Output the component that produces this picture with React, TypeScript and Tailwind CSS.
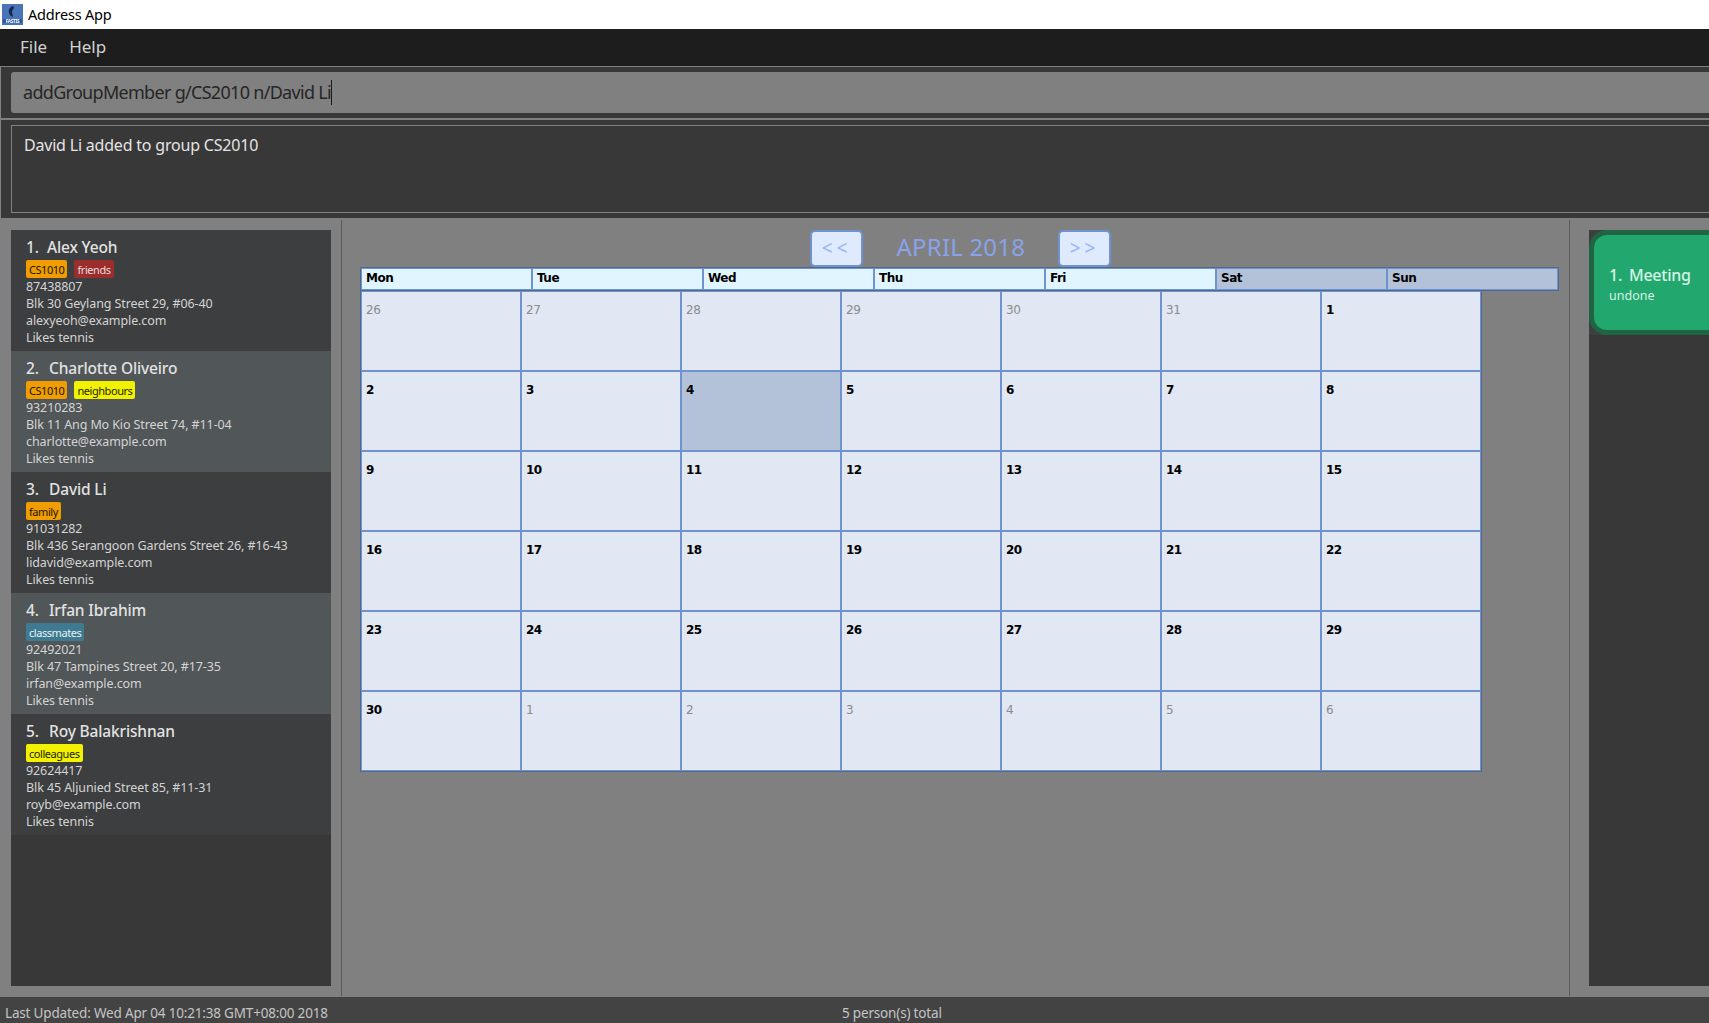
const persons = [
  { id: 1, name: 'Alex Yeoh', phone: '87438807', address: 'Blk 30 Geylang Street 29, #06-40', email: 'alexyeoh@example.com', tags: ['CS1010', 'friends'] },
  { id: 2, name: 'Charlotte Oliveiro', phone: '93210283', address: 'Blk 11 Ang Mo Kio Street 74, #11-04', email: 'charlotte@example.com', tags: ['CS1010', 'neighbours'] },
  { id: 3, name: 'David Li', phone: '91031282', address: 'Blk 436 Serangoon Gardens Street 26, #16-43', email: 'lidavid@example.com', tags: ['family'] },
  { id: 4, name: 'Irfan Ibrahim', phone: '92492021', address: 'Blk 47 Tampines Street 20, #17-35', email: 'irfan@example.com', tags: ['classmates'] },
  { id: 5, name: 'Roy Balakrishnan', phone: '92624417', address: 'Blk 45 Aljunied Street 85, #11-31', email: 'royb@example.com', tags: ['colleagues'] },
];

const tagColors: Record<string, string> = {
  CS1010: 'bg-[#ef9d00] text-[#1c1400]',
  friends: 'bg-[#9b2d2d] text-[#e8dcdc]',
  neighbours: 'bg-[#f2f200] text-[#1c1c00]',
  family: 'bg-[#ef9d00] text-[#1c1400]',
  classmates: 'bg-[#3f7a93] text-[#e8f0f4]',
  colleagues: 'bg-[#f2f200] text-[#1c1c00]',
};

const weekDays = ['Mon', 'Tue', 'Wed', 'Thu', 'Fri', 'Sat', 'Sun'];

const days = [
  ...[26, 27, 28, 29, 30, 31].map((d) => ({ d, muted: true })),
  ...Array.from({ length: 30 }, (_, i) => ({ d: i + 1, muted: false })),
  ...[1, 2, 3, 4, 5, 6].map((d) => ({ d, muted: true })),
];

const PersonCard = ({ person, index }: { person: (typeof persons)[number]; index: number }) => (
  <div className={`h-[121px] pl-[15px] pt-[5px] text-[12.5px] leading-[17px] tracking-[-0.1px] text-[#d4d4d4] ${index % 2 === 0 ? 'bg-[#3c3e3f]' : 'bg-[#515658]'}`}>
    <div className="flex h-[24px] items-center text-[15.5px] font-medium tracking-[-0.15px] text-[#e2e2e2]">
      <span className={person.id === 1 ? 'w-[21px]' : 'w-[23px]'}>{person.id}.</span>
      <span>{person.name}</span>
    </div>
    <div className="mt-[1px] flex gap-[7px]">
      {person.tags.map((tag) => (
        <span key={tag} className={`flex h-[18px] items-center rounded-[2px] px-[3px] text-[11px] tracking-[-0.45px] ${tagColors[tag]}`}>
          {tag}
        </span>
      ))}
    </div>
    <div>{person.phone}</div>
    <div>{person.address}</div>
    <div>{person.email}</div>
    <div>Likes tennis</div>
  </div>
);

const NavButton = ({ label }: { label: string }) => (
  <button className="flex h-[37px] w-[53px] items-center justify-center rounded-[5px] border-2 border-[#6f93cf] bg-[#dfeaff] text-[19px] tracking-[4px] text-[#9ab2f2]">
    {label}
  </button>
);

export default function App() {
  return (
    <div className="flex h-screen w-full flex-col overflow-hidden bg-[#808080] font-['Noto_Sans',sans-serif]">
      {/* Title bar */}
      <div className="flex h-[29px] items-center gap-[5px] bg-white pl-[2px] text-[14.5px] tracking-[-0.2px] text-black">
        <svg width="21" height="21" viewBox="0 0 21 21">
          <rect width="21" height="21" fill="#4a74b8" />
          <path d="M11 2c-3 1-5 4-4 7 0 2 2 3 4 4 0-2-1-3-1-5 0-2 2-3 2-5z" fill="#16284f" />
          <rect x="1" y="15" width="19" height="4" fill="#2f5499" />
          <text x="10.5" y="18.6" fontSize="4.5" fontWeight="700" fill="#ffffff" textAnchor="middle">FASTIS</text>
        </svg>
        <span>Address App</span>
      </div>

      {/* Menu */}
      <div className="flex h-[37px] items-center gap-[22px] bg-[#1d1d1d] pb-[2px] pl-[20px] text-[17px] text-[#d2d2d2]">
        <span>File</span>
        <span>Help</span>
      </div>

      {/* Command box and result */}
      <div className="h-[152px] border-l border-t border-[#808080] bg-[#383838] pt-[5px]">
        <div className="ml-[10px] flex h-[41px] items-center rounded-l-[3px] bg-[#808080] pl-[12px] text-[18px] tracking-[-0.7px] text-[#262626]">
          <span>addGroupMember g/CS2010 n/David Li</span>
          <span className="h-[25px] w-px bg-[#1a1a1a]" />
        </div>
        <div className="mt-[5px] h-[2px] bg-[#808080]" />
        <div className="ml-[10px] mt-[5px] h-[88px] border border-r-0 border-[#808080] pl-[12px] pt-[7px] text-[16px] tracking-[-0.2px] text-[#e4e4e4]">
          David Li added to group CS2010
        </div>
      </div>

      {/* Main panels */}
      <div className="flex min-h-0 flex-1">
        <div className="w-[341px] shrink-0 pb-[11px] pl-[11px] pr-[10px] pt-[12px]">
          <div className="h-full bg-[#383838]">
            {persons.map((p, i) => (
              <PersonCard key={p.id} person={p} index={i} />
            ))}
          </div>
        </div>
        <div className="mb-[1px] mt-[2px] w-px bg-[#5a5a5a]" />

        <div className="w-[1227px] shrink-0 pl-[18px] pt-[12px]">
          <div className="w-[1199px]">
            <div className="flex h-[37px] items-center justify-center gap-[33.5px] pl-[2px]">
              <NavButton label="<<" />
              <span className="-mt-[3px] w-[128px] whitespace-nowrap text-center text-[24px] tracking-[0.2px] text-[#88a3ea]">APRIL 2018</span>
              <NavButton label=">>" />
            </div>
            <div className="grid grid-cols-7 border border-[#55688c] font-['DejaVu_Sans',sans-serif] text-[12px] font-bold tracking-[-0.5px] text-black">
              {weekDays.map((w, i) => (
                <div key={w} className={`h-[22px] border border-[#6f93cf] pl-[4px] leading-[18px] ${i > 4 ? 'bg-[#b3c2d9]' : 'bg-[#e0f5ff]'}`}>
                  {w}
                </div>
              ))}
            </div>
          </div>
          <div className="grid w-[1122px] grid-cols-[repeat(7,160px)] border border-t-0 border-[#55688c] font-['DejaVu_Sans',sans-serif] text-[12px] font-bold tracking-[-0.5px]">
            {days.map((c, i) => (
              <div
                key={i}
                className={`h-[80px] border border-[#6f93cf] pl-[4px] pt-[9px] ${c.d === 4 && !c.muted ? 'bg-[#b3c2d9]' : 'bg-[#e1e7f3]'} ${c.muted ? 'font-normal text-[#8c8c8c]' : 'text-black'}`}
              >
                {c.d}
              </div>
            ))}
          </div>
        </div>
        <div className="mb-[1px] mt-[2px] w-px bg-[#5a5a5a]" />

        {/* Task panel */}
        <div className="min-w-0 flex-1 pb-[11px] pl-[19px] pt-[12px]">
          <div className="h-full overflow-hidden bg-[#383838]">
            <div className="h-[105px] w-[300px] bg-[#3c3e3f]">
              <div className="h-full rounded-[18px] border-[5px] border-[#1f6544] bg-[#22a86e] pl-[15px] pt-[28px] text-[#d8f3e6]">
                <div className="flex h-[24px] items-center text-[16px] font-medium tracking-[-0.25px]">
                  <span className="w-[20px]">1.</span>
                  <span>Meeting</span>
                </div>
                <div className="text-[12.5px] leading-[17px]">undone</div>
              </div>
            </div>
          </div>
        </div>
      </div>

      {/* Status bar */}
      <div className="flex h-[26px] items-center bg-[#434343] pl-[5px] pt-[7px] text-[13.5px] tracking-[-0.18px] text-[#c4c4c4]">
        <span className="w-[837px] shrink-0">Last Updated: Wed Apr 04 10:21:38 GMT+08:00 2018</span>
        <span>5 person(s) total</span>
      </div>
    </div>
  );
}
